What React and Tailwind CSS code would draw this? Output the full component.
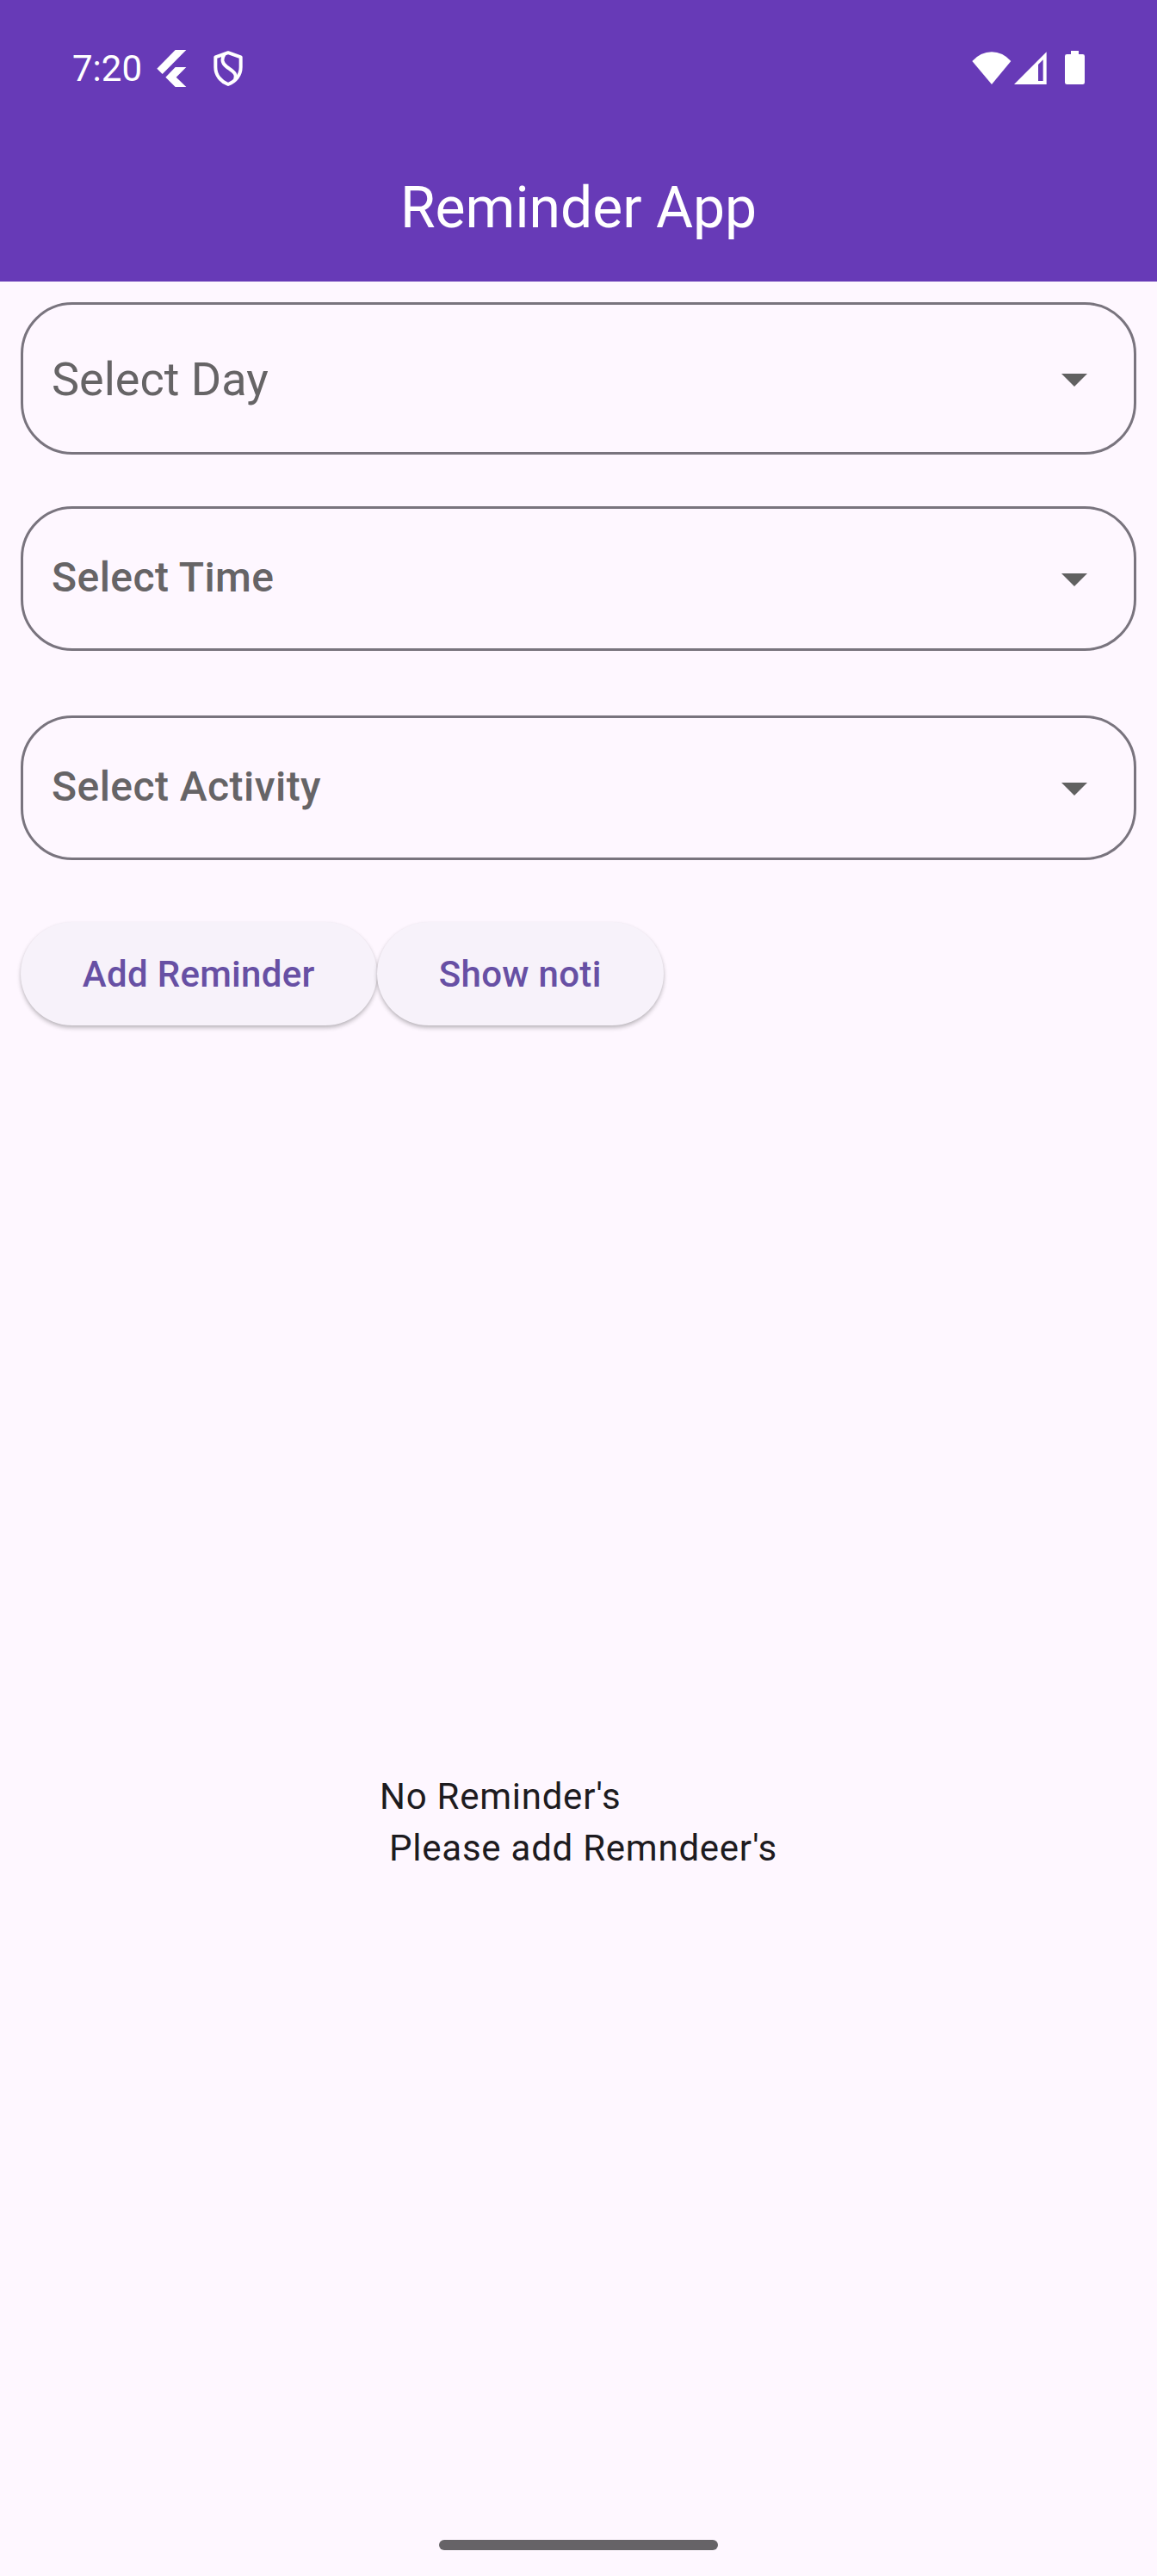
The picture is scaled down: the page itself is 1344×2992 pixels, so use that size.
function FlutterIcon() {
  return (
    <svg className="ml-[17px] h-11 w-[35px] shrink-0" viewBox="0 0 105 132" fill="#fff">
      <path d="M65 0H103L20 84L1 65Z" />
      <path d="M65 60H103L68 95L103 129H65L31 95Z" />
    </svg>
  );
}

function ShieldIcon() {
  return (
    <svg className="ml-[31px] h-[42px] w-[34px] shrink-0" viewBox="0 0 102 126" fill="none" stroke="#fff" strokeWidth="12" strokeLinejoin="round">
      <path d="M51 6.500L95 22V57C95 85 77 107 51 117C25 107 7 85 7 57V22Z" />
      <path d="M38 12C27 30 29 43 46 56C69 73 83 79 75 100" />
    </svg>
  );
}

function WifiIcon() {
  return (
    <svg className="h-[38px] w-[46px]" viewBox="0 0 138 114" fill="#fff">
      <path d="M1 33Q31 1 69 1Q107 1 136 33L69 114Z" />
    </svg>
  );
}

function SignalIcon() {
  return (
    <svg className="ml-[3px] h-[38px] w-[38px]" viewBox="0 0 114 114" fill="#fff">
      <path fillRule="evenodd" d="M0 114L113 1V114ZM84 102H101V28L84 45Z" />
    </svg>
  );
}

function BatteryIcon() {
  return (
    <svg className="ml-[21px] h-[39px] w-[23px]" viewBox="0 0 69 117" fill="#fff">
      <path d="M21 0H48V12H62Q69 12 69 19V110Q69 117 62 117H7Q0 117 0 110V19Q0 12 7 12H21Z" />
    </svg>
  );
}

function Arrow() {
  return (
    <svg className="size-[72px] shrink-0" viewBox="0 0 24 24" fill="#616161">
      <path d="M7 10l5 5 5-5z" />
    </svg>
  );
}

export default function App() {
  return (
    <div className="flex h-[2992px] w-[1344px] flex-col bg-[#fef7ff] font-['Roboto',sans-serif]">
      <header className="h-[327px] shrink-0 bg-[#673ab7] text-white">
        <div className="flex h-[160px] items-center justify-between pr-[84px] pl-[84px]">
          <div className="flex items-center">
            <span className="text-[42px] leading-[50px]">7:20</span>
            <FlutterIcon />
            <ShieldIcon />
          </div>
          <div className="flex items-center pb-[3px]">
            <WifiIcon />
            <SignalIcon />
            <BatteryIcon />
          </div>
        </div>
        <h1 className="flex h-[163px] items-center justify-center text-[66px] leading-[84px] font-normal">Reminder App</h1>
      </header>

      <main className="flex grow flex-col px-6 pt-6">
        <div className="flex h-[177px] shrink-0 items-center justify-between rounded-[60px] border-[3px] border-[#79747e] pr-[33px] pl-[33px] text-[54px] text-[#666466]">
          <span className="pt-[2px] leading-[72px]">Select Day</span>
          <Arrow />
        </div>
        <div className="mt-[60px] flex h-[168px] shrink-0 items-center justify-between rounded-[60px] border-[3px] border-[#79747e] pr-[33px] pl-[33px] text-[48px] font-medium tracking-[0.45px] text-[#666466]">
          <span className="pb-[3px] leading-[72px]">Select Time</span>
          <Arrow />
        </div>
        <div className="mt-[75px] flex h-[168px] shrink-0 items-center justify-between rounded-[60px] border-[3px] border-[#79747e] pr-[33px] pl-[33px] text-[48px] font-medium tracking-[0.45px] text-[#666466]">
          <span className="pb-[3px] leading-[72px]">Select Activity</span>
          <Arrow />
        </div>

        <div className="mt-[72px] flex text-[42px] font-medium tracking-[0.3px] text-[#6750a4]">
          <button className="h-[120px] w-[413.500px] rounded-full bg-[#f7f2fa] shadow-[0_3px_5px_rgba(0,0,0,0.24),0_1px_3px_rgba(0,0,0,0.05)]">Add Reminder</button>
          <button className="h-[120px] w-[333.500px] rounded-full bg-[#f7f2fa] shadow-[0_3px_5px_rgba(0,0,0,0.24),0_1px_3px_rgba(0,0,0,0.05)]">Show noti</button>
        </div>

        <div className="mt-[866px] flex justify-center">
          <p className="text-[42px] leading-[60px] tracking-[0.75px] whitespace-pre text-[#1d1b20]">{"No Reminder's \n Please add Remndeer's"}</p>
        </div>
      </main>

      <div className="mb-[30px] h-3 w-[324px] shrink-0 self-center rounded-full bg-[#666367]" />
    </div>
  );
}
